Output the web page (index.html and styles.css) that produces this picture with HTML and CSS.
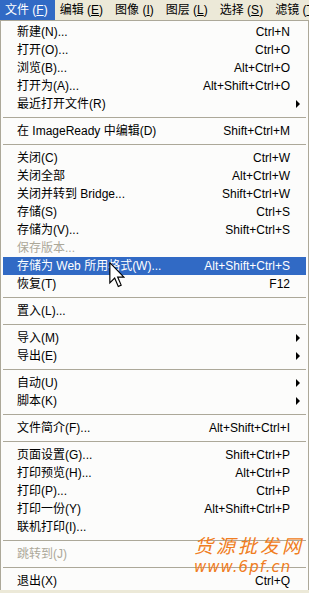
FILE: index.html
```html
<!DOCTYPE html>
<html>
<head>
    <meta name="viewport" content="width=device-width, initial-scale=1">
    <link rel="stylesheet" href="styles.css">
</head>

<body>

<div class="menubar">
    <span class="top active">文件 (<u>F</u>)</span>
    <span class="top">编辑 (<u>E</u>)</span>
    <span class="top">图像 (<u>I</u>)</span>
    <span class="top">图层 (<u>L</u>)</span>
    <span class="top">选择 (<u>S</u>)</span>
    <span class="top">滤镜 (<u>T</u>)</span>
</div>

<div class="dropdown">
    <div class="item"><span class="label">新建(N)...</span><span class="key">Ctrl+N</span><span class="sub"></span></div>
    <div class="item"><span class="label">打开(O)...</span><span class="key">Ctrl+O</span><span class="sub"></span></div>
    <div class="item"><span class="label">浏览(B)...</span><span class="key">Alt+Ctrl+O</span><span class="sub"></span></div>
    <div class="item"><span class="label">打开为(A)...</span><span class="key">Alt+Shift+Ctrl+O</span><span class="sub"></span></div>
    <div class="item"><span class="label">最近打开文件(R)</span><span class="key"></span><span class="sub"><i class="arrow"></i></span></div>
    <div class="sep"></div>
    <div class="item"><span class="label">在 ImageReady 中编辑(D)</span><span class="key">Shift+Ctrl+M</span><span class="sub"></span></div>
    <div class="sep"></div>
    <div class="item"><span class="label">关闭(C)</span><span class="key">Ctrl+W</span><span class="sub"></span></div>
    <div class="item"><span class="label">关闭全部</span><span class="key">Alt+Ctrl+W</span><span class="sub"></span></div>
    <div class="item"><span class="label">关闭并转到 Bridge...</span><span class="key">Shift+Ctrl+W</span><span class="sub"></span></div>
    <div class="item"><span class="label">存储(S)</span><span class="key">Ctrl+S</span><span class="sub"></span></div>
    <div class="item"><span class="label">存储为(V)...</span><span class="key">Shift+Ctrl+S</span><span class="sub"></span></div>
    <div class="item disabled"><span class="label">保存版本...</span><span class="key"></span><span class="sub"></span></div>
    <div class="item selected"><span class="label">存储为 Web 所用格式(W)...</span><span class="key">Alt+Shift+Ctrl+S</span><span class="sub"></span></div>
    <div class="item"><span class="label">恢复(T)</span><span class="key">F12</span><span class="sub"></span></div>
    <div class="sep"></div>
    <div class="item"><span class="label">置入(L)...</span><span class="key"></span><span class="sub"></span></div>
    <div class="sep"></div>
    <div class="item"><span class="label">导入(M)</span><span class="key"></span><span class="sub"><i class="arrow"></i></span></div>
    <div class="item"><span class="label">导出(E)</span><span class="key"></span><span class="sub"><i class="arrow"></i></span></div>
    <div class="sep"></div>
    <div class="item"><span class="label">自动(U)</span><span class="key"></span><span class="sub"><i class="arrow"></i></span></div>
    <div class="item"><span class="label">脚本(K)</span><span class="key"></span><span class="sub"><i class="arrow"></i></span></div>
    <div class="sep"></div>
    <div class="item"><span class="label">文件简介(F)...</span><span class="key">Alt+Shift+Ctrl+I</span><span class="sub"></span></div>
    <div class="sep"></div>
    <div class="item"><span class="label">页面设置(G)...</span><span class="key">Shift+Ctrl+P</span><span class="sub"></span></div>
    <div class="item"><span class="label">打印预览(H)...</span><span class="key">Alt+Ctrl+P</span><span class="sub"></span></div>
    <div class="item"><span class="label">打印(P)...</span><span class="key">Ctrl+P</span><span class="sub"></span></div>
    <div class="item"><span class="label">打印一份(Y)</span><span class="key">Alt+Shift+Ctrl+P</span><span class="sub"></span></div>
    <div class="item"><span class="label">联机打印(I)...</span><span class="key"></span><span class="sub"></span></div>
    <div class="sep"></div>
    <div class="item disabled"><span class="label">跳转到(J)</span><span class="key"></span><span class="sub"></span></div>
    <div class="sep"></div>
    <div class="item"><span class="label">退出(X)</span><span class="key">Ctrl+Q</span><span class="sub"></span></div>
</div>

<!-- mouse pointer over the selected item -->
<svg class="cursor" width="16" height="26" viewBox="0 0 12 20">
    <path d="M0.5 0.5 L0.5 16 L4.2 12.4 L7 18.8 L9.2 17.8 L6.5 11.6 L11.3 11.6 Z" fill="#fff" stroke="#000" stroke-width="0.9" stroke-linejoin="miter"/>
</svg>

<!-- site watermark -->
<div class="watermark">
    <div class="wm-name">货源批发网</div>
    <div class="wm-url">www.6pf.cn</div>
</div>

</body>
</html>
```

FILE: styles.css
```css
body {
    margin: 0;
    font-family: "Liberation Sans", "Noto Sans CJK SC", sans-serif;
    font-size: 12px;
    color: #000;
    background: #ece9d8;
    overflow: hidden;
}

.menubar {
    display: flex;
    height: 20px;
    background: #ece9d8;
    white-space: nowrap;
    overflow: hidden;
}

.top {
    padding: 0 7px 0 5px;
    line-height: 20px;
    flex-shrink: 0;
}

.top.active {
    background: #316ac5;
    color: #fff;
}

.dropdown {
    background: #fcfcfb;
    border: 1px solid #aca899;
    border-bottom: none;
    padding: 2px 2px 0 2px;
}

.item {
    display: flex;
    height: 18px;
    line-height: 18px;
    padding-left: 14px;
    white-space: nowrap;
}

.item .label {
    flex: 1;
}

.item .key {
    text-align: right;
}

.item .sub {
    width: 16px;
    display: flex;
    align-items: center;
    justify-content: flex-end;
    padding-right: 6px;
    box-sizing: border-box;
}

.arrow {
    width: 0;
    height: 0;
    border-left: 4px solid #000;
    border-top: 4px solid transparent;
    border-bottom: 4px solid transparent;
}

.item.selected {
    background: #316ac5;
    color: #fff;
}

.item.disabled {
    color: #aca899;
}

.sep {
    height: 1px;
    background: #aca899;
    margin: 4px 0 4px 0;
}

.cursor {
    position: absolute;
    left: 109px;
    top: 262px;
}

.watermark {
    position: absolute;
    left: 194px;
    top: 532px;
    color: #f07d22;
    font-family: "Noto Sans CJK SC", sans-serif;
    font-style: italic;
}

.wm-name {
    font-size: 19px;
    line-height: 26px;
    letter-spacing: 3px;
}

.wm-url {
    font-family: "DejaVu Sans", sans-serif;
    font-size: 15px;
    line-height: 18px;
    letter-spacing: 1px;
}
```
